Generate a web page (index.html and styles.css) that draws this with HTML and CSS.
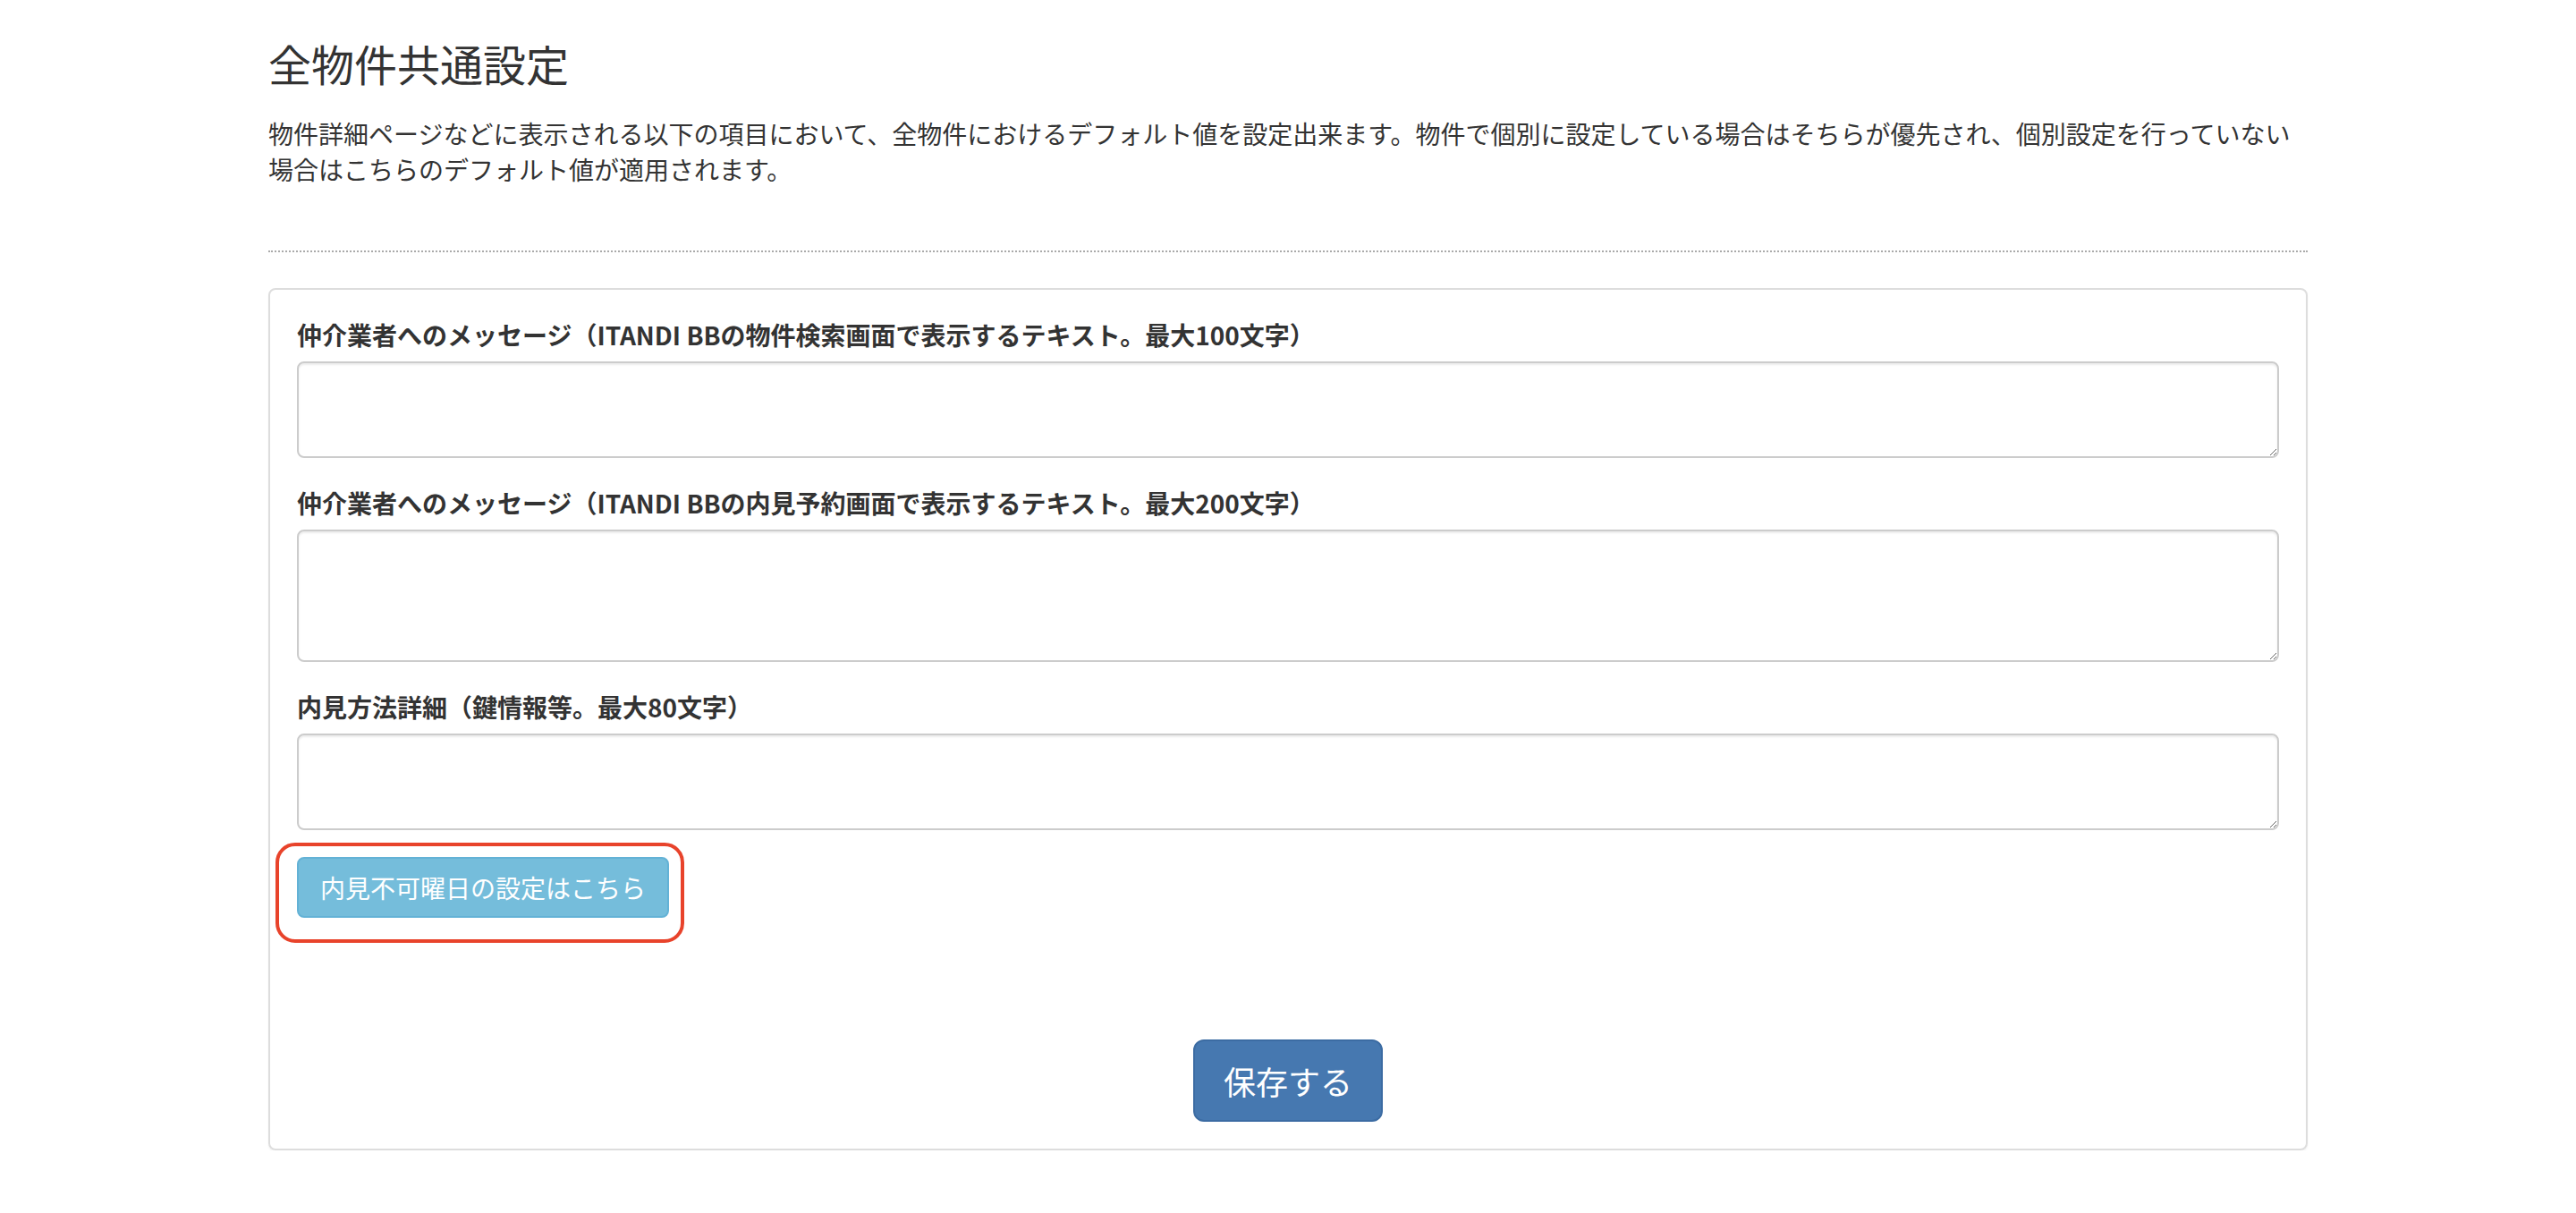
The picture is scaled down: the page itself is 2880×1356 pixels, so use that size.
FILE: index.html
```html
<!DOCTYPE html>
<html lang="ja">
<head>
    <meta charset="UTF-8">
    <meta name="viewport" content="width=device-width, initial-scale=1.0">
    <title>全物件共通設定</title>
    <link rel="stylesheet" href="styles.css">
</head>
<body>
    <div class="container">
        <h3 class="page-title">全物件共通設定</h3>
        <p class="page-desc">物件詳細ページなどに表示される以下の項目において、全物件におけるデフォルト値を設定出来ます。物件で個別に設定している場合はそちらが優先され、個別設定を行っていない場合はこちらのデフォルト値が適用されます。</p>
        <hr class="dotted">

        <div class="panel">
            <div class="form-group">
                <label for="searchMessage">仲介業者へのメッセージ（ITANDI BBの物件検索画面で表示するテキスト。最大100文字）</label>
                <textarea id="searchMessage" class="rows-2"></textarea>
            </div>
            <div class="form-group">
                <label for="reserveMessage">仲介業者へのメッセージ（ITANDI BBの内見予約画面で表示するテキスト。最大200文字）</label>
                <textarea id="reserveMessage" class="rows-3"></textarea>
            </div>
            <div class="form-group">
                <label for="viewingDetail">内見方法詳細（鍵情報等。最大80文字）</label>
                <textarea id="viewingDetail" class="rows-2"></textarea>
            </div>
            <div class="marked">
                <button class="btn btn-info">内見不可曜日の設定はこちら</button>
                <span class="mark"></span>
            </div>
            <div class="actions">
                <button class="btn btn-primary">保存する</button>
            </div>
        </div>
    </div>
</body>
</html>
```

FILE: styles.css
```css
body {
    margin: 0;
    font-family: "Noto Sans CJK JP", "Noto Sans", sans-serif;
    font-size: 28px;
    line-height: 40px;
    color: #333;
    background: #fff;
}
.container {
    width: 2280px;
    margin: 0 auto;
}
.page-title {
    font-size: 48px;
    font-weight: 400;
    line-height: 53px;
    margin: 44px 0 0;
}
.page-desc {
    margin: 32px 0 0;
}
hr.dotted {
    border: none;
    border-top: 2px dotted #aaa;
    margin: 71px 0 40px;
}
.panel {
    border: 2px solid #ddd;
    border-radius: 8px;
    padding: 30px;
    box-shadow: 0 2px 2px rgba(0, 0, 0, 0.05);
}
.form-group {
    margin-bottom: 30px;
}
.form-group label {
    display: block;
    font-weight: bold;
    margin-bottom: 10px;
}
textarea {
    display: block;
    box-sizing: border-box;
    width: 100%;
    padding: 12px 24px;
    border: 2px solid #ccc;
    border-radius: 8px;
    box-shadow: inset 0 2px 2px rgba(0, 0, 0, 0.075);
    font-family: inherit;
    font-size: 28px;
    color: #555;
}
textarea.rows-2 {
    height: 108px;
}
textarea.rows-3 {
    height: 148px;
}
.btn {
    font-family: inherit;
    color: #fff;
    cursor: pointer;
    border-style: solid;
    border-width: 2px;
}
.btn-info {
    font-size: 28px;
    line-height: 40px;
    padding: 12px 24px;
    border-radius: 8px;
    background: #75bddb;
    border-color: #63b2d6;
}
.btn-primary {
    font-size: 36px;
    line-height: 48px;
    padding: 20px 32px;
    border-radius: 12px;
    background: #4678b0;
    border-color: #3c6ca3;
}
.marked {
    position: relative;
    display: inline-block;
    vertical-align: top;
}
.marked .btn {
    display: block;
}
.mark {
    position: absolute;
    left: -24px;
    top: -16px;
    width: 449px;
    height: 104px;
    border: 4px solid #e8432b;
    border-radius: 22px;
    pointer-events: none;
}
.actions {
    text-align: center;
    margin-top: 136px;
}
```
